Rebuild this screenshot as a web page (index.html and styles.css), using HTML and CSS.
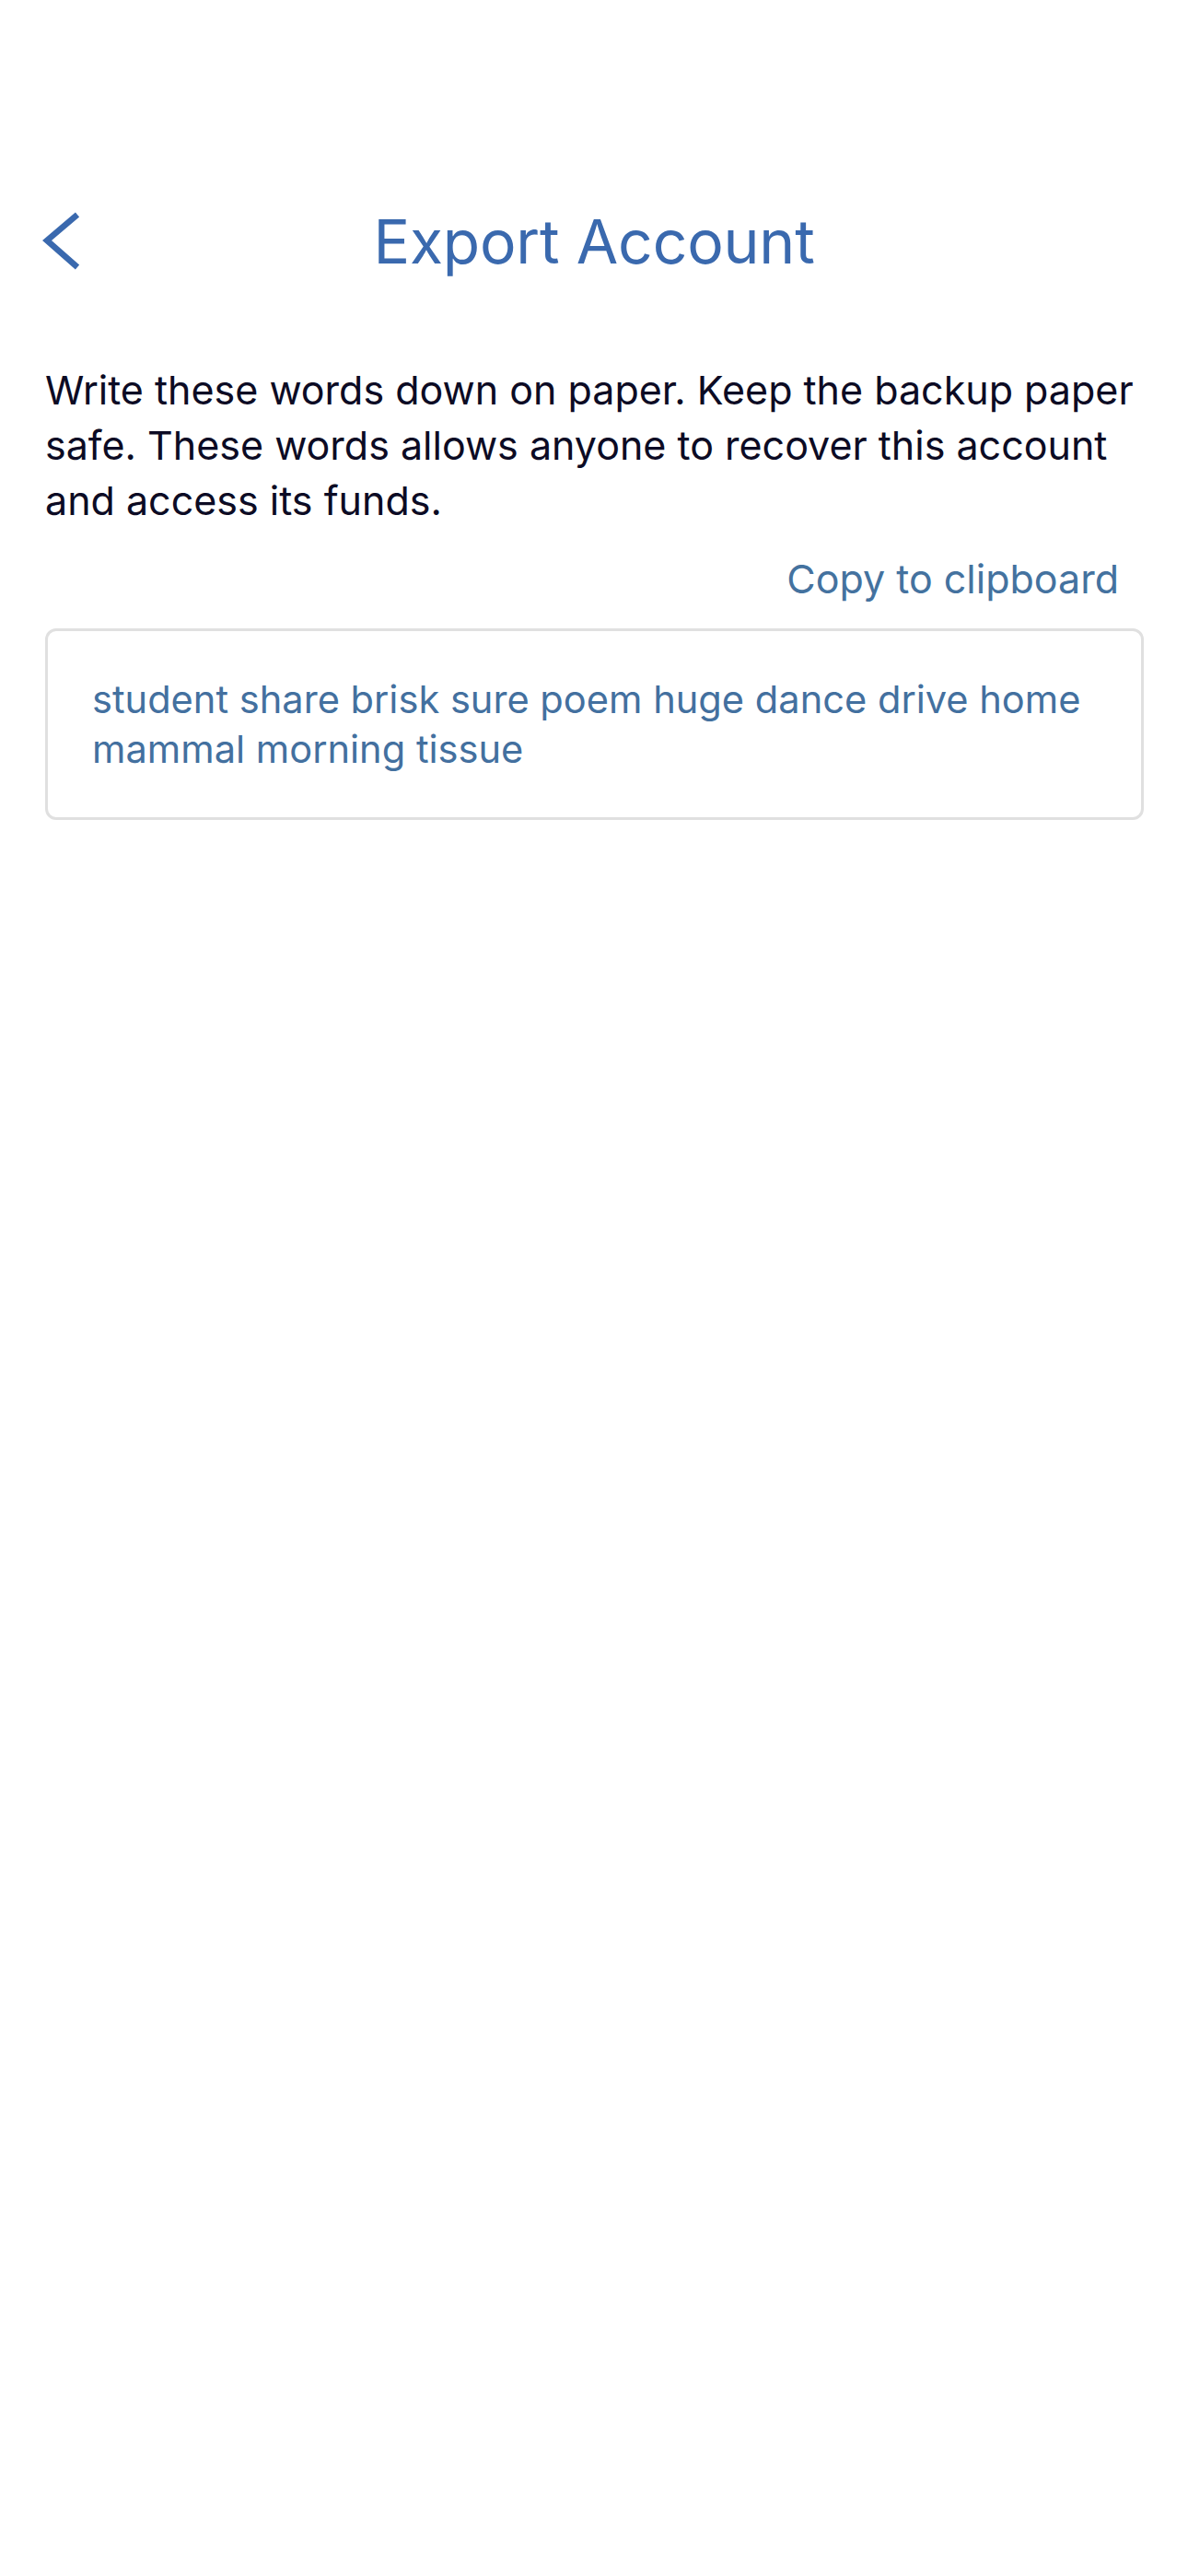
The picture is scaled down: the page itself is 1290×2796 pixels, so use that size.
FILE: index.html
```html
<!DOCTYPE html>
<html lang="en">
<head>
<meta charset="utf-8">
<title>Export Account</title>
<link rel="stylesheet" href="styles.css">
</head>
<body>
<div class="screen">
  <header class="nav">
    <button class="back" aria-label="Back">
      <svg width="44" height="66" viewBox="0 0 44 66" aria-hidden="true">
        <polyline points="38,4 5,32 38,61" fill="none" stroke="#3a69ae" stroke-width="6.5" stroke-linejoin="miter" stroke-linecap="butt"/>
      </svg>
    </button>
    <h1 class="title">Export Account</h1>
    <span class="spacer"></span>
  </header>
  <main class="content">
    <p class="intro">Write these words down on paper. Keep the backup paper safe. These words allows anyone to recover this account and access its funds.</p>
    <div class="copy-row"><span class="copy">Copy to clipboard</span></div>
    <div class="phrase-box">
      <p class="phrase">student share brisk sure poem huge dance drive home mammal morning tissue</p>
    </div>
  </main>
</div>
</body>
</html>
```
FILE: styles.css
```css
html, body {
  margin: 0;
  padding: 0;
  background: #ffffff;
}
body {
  width: 1290px;
  min-height: 2796px;
  font-family: Inter, "Noto Sans", "Liberation Sans", sans-serif;
}
.screen {
  padding-top: 202px;
}
.nav {
  display: grid;
  grid-template-columns: 1fr auto 1fr;
  align-items: center;
  height: 120px;
}
.back {
  justify-self: start;
  margin-left: 46px;
  padding: 0;
  border: 0;
  background: none;
  display: flex;
}
.title {
  margin: 0;
  font-size: 66px;
  font-weight: 400;
  color: #3a69ae;
  letter-spacing: -0.2px;
}
.content {
  padding: 71px 48px 0 49px;
}
.intro {
  margin: 0;
  font-size: 43px;
  line-height: 60px;
  color: #0c0b24;
  letter-spacing: 0;
}
.copy-row {
  display: flex;
  justify-content: flex-end;
  padding: 28px 27px 0 0;
}
.copy {
  font-size: 43px;
  line-height: 54px;
  color: #44729f;
}
.phrase-box {
  margin-top: 27px;
  border: 3px solid #e0e0e0;
  border-radius: 12px;
  padding: 47px 30px 47px 48px;
}
.phrase {
  margin: 0;
  font-size: 41.6px;
  line-height: 54px;
  color: #43709f;
}
```
